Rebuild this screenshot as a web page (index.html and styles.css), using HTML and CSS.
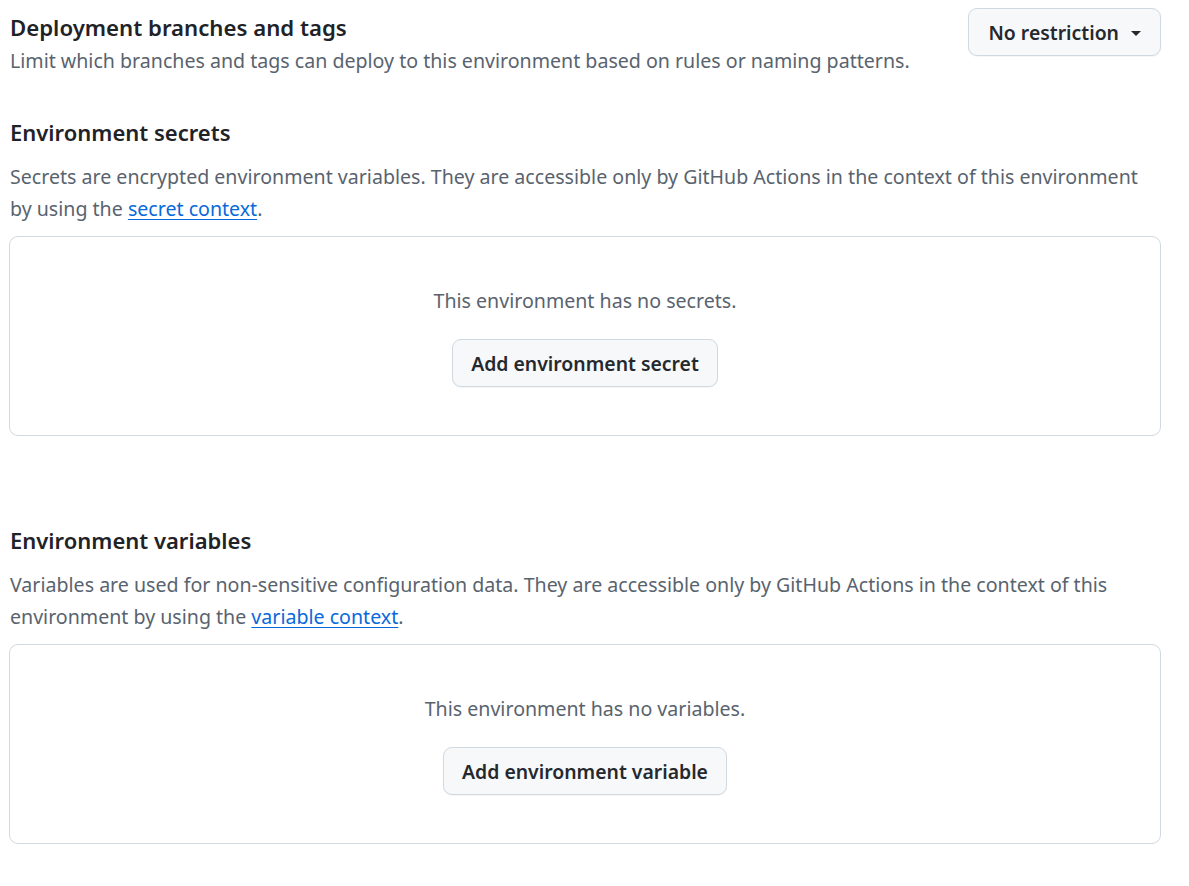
FILE: index.html
```html
<!DOCTYPE html>
<html lang="en">
<head>
<meta charset="utf-8">
<title>Environment settings</title>
<link rel="stylesheet" href="styles.css">
</head>
<body>
<main class="page">
  <section class="subhead">
    <div class="subhead-text">
      <h2 class="subhead-title">Deployment branches and tags</h2>
      <p class="muted">Limit which branches and tags can deploy to this environment based on rules or naming patterns.</p>
    </div>
    <button class="btn btn-menu" type="button">No restriction <span class="caret"></span></button>
  </section>

  <section class="env-section">
    <h2 class="section-title">Environment secrets</h2>
    <p class="muted desc">Secrets are encrypted environment variables. They are accessible only by GitHub Actions in the context of this environment by using the <a href="#" class="link">secret context</a>.</p>
    <div class="blank">
      <p class="muted">This environment has no secrets.</p>
      <button class="btn" type="button">Add environment secret</button>
    </div>
  </section>

  <section class="env-section env-section-gap">
    <h2 class="section-title">Environment variables</h2>
    <p class="muted desc">Variables are used for non-sensitive configuration data. They are accessible only by GitHub Actions in the context of this environment by using the <a href="#" class="link">variable context</a>.</p>
    <div class="blank">
      <p class="muted">This environment has no variables.</p>
      <button class="btn" type="button">Add environment variable</button>
    </div>
  </section>
</main>
</body>
</html>
```

FILE: styles.css
```css
* { box-sizing: border-box; }
html, body { margin: 0; padding: 0; background: #ffffff; }
body {
  font-family: "Noto Sans", "Open Sans", sans-serif;
  font-size: 19.6px;
  line-height: 32px;
  color: #1f2328;
}
.page {
  width: 1152px;
  margin-left: 9px;
  padding-top: 8px;
}
p { margin: 0; }
h2 { margin: 0; }

.subhead {
  display: flex;
  justify-content: space-between;
  align-items: flex-start;
}
.subhead-text { padding-top: 4px; padding-left: 1px; }
.subhead-title {
  font-size: 22.2px;
  font-weight: 600;
  line-height: 32px;
  color: #1f2328;
}
.subhead-text .muted { margin-top: 1px; }

.muted { color: #59636e; }
.link { color: #0969da; text-decoration: underline; text-underline-offset: 3px; }

.env-section { margin-top: 39px; padding-left: 1px; }
.env-section-gap { margin-top: 88px; }
.section-title {
  font-size: 22px;
  font-weight: 600;
  line-height: 32px;
}
.desc { margin-top: 13px; }

.blank {
  margin-top: 11px;
  margin-left: -1px;
  border: 1px solid #d1d9e0;
  border-radius: 9px;
  padding: 48px 24px 48px;
  display: flex;
  flex-direction: column;
  align-items: center;
}
.blank .muted { text-align: center; }
.blank .btn { margin-top: 22px; }

.btn {
  font-family: inherit;
  font-size: 19.4px;
  font-weight: 600;
  color: #25292e;
  background: #f6f8fa;
  border: 1px solid #d1d9e0;
  border-radius: 9px;
  height: 48px;
  padding: 0 18px;
  display: inline-flex;
  align-items: center;
  gap: 12px;
  cursor: pointer;
  box-shadow: 0 1px 0 rgba(31, 35, 40, 0.04);
}
.btn-menu { padding: 0 19px; }
.caret {
  width: 0;
  height: 0;
  border-left: 5px solid transparent;
  border-right: 5px solid transparent;
  border-top: 5px solid #25292e;
  margin-top: 2px;
}
```
